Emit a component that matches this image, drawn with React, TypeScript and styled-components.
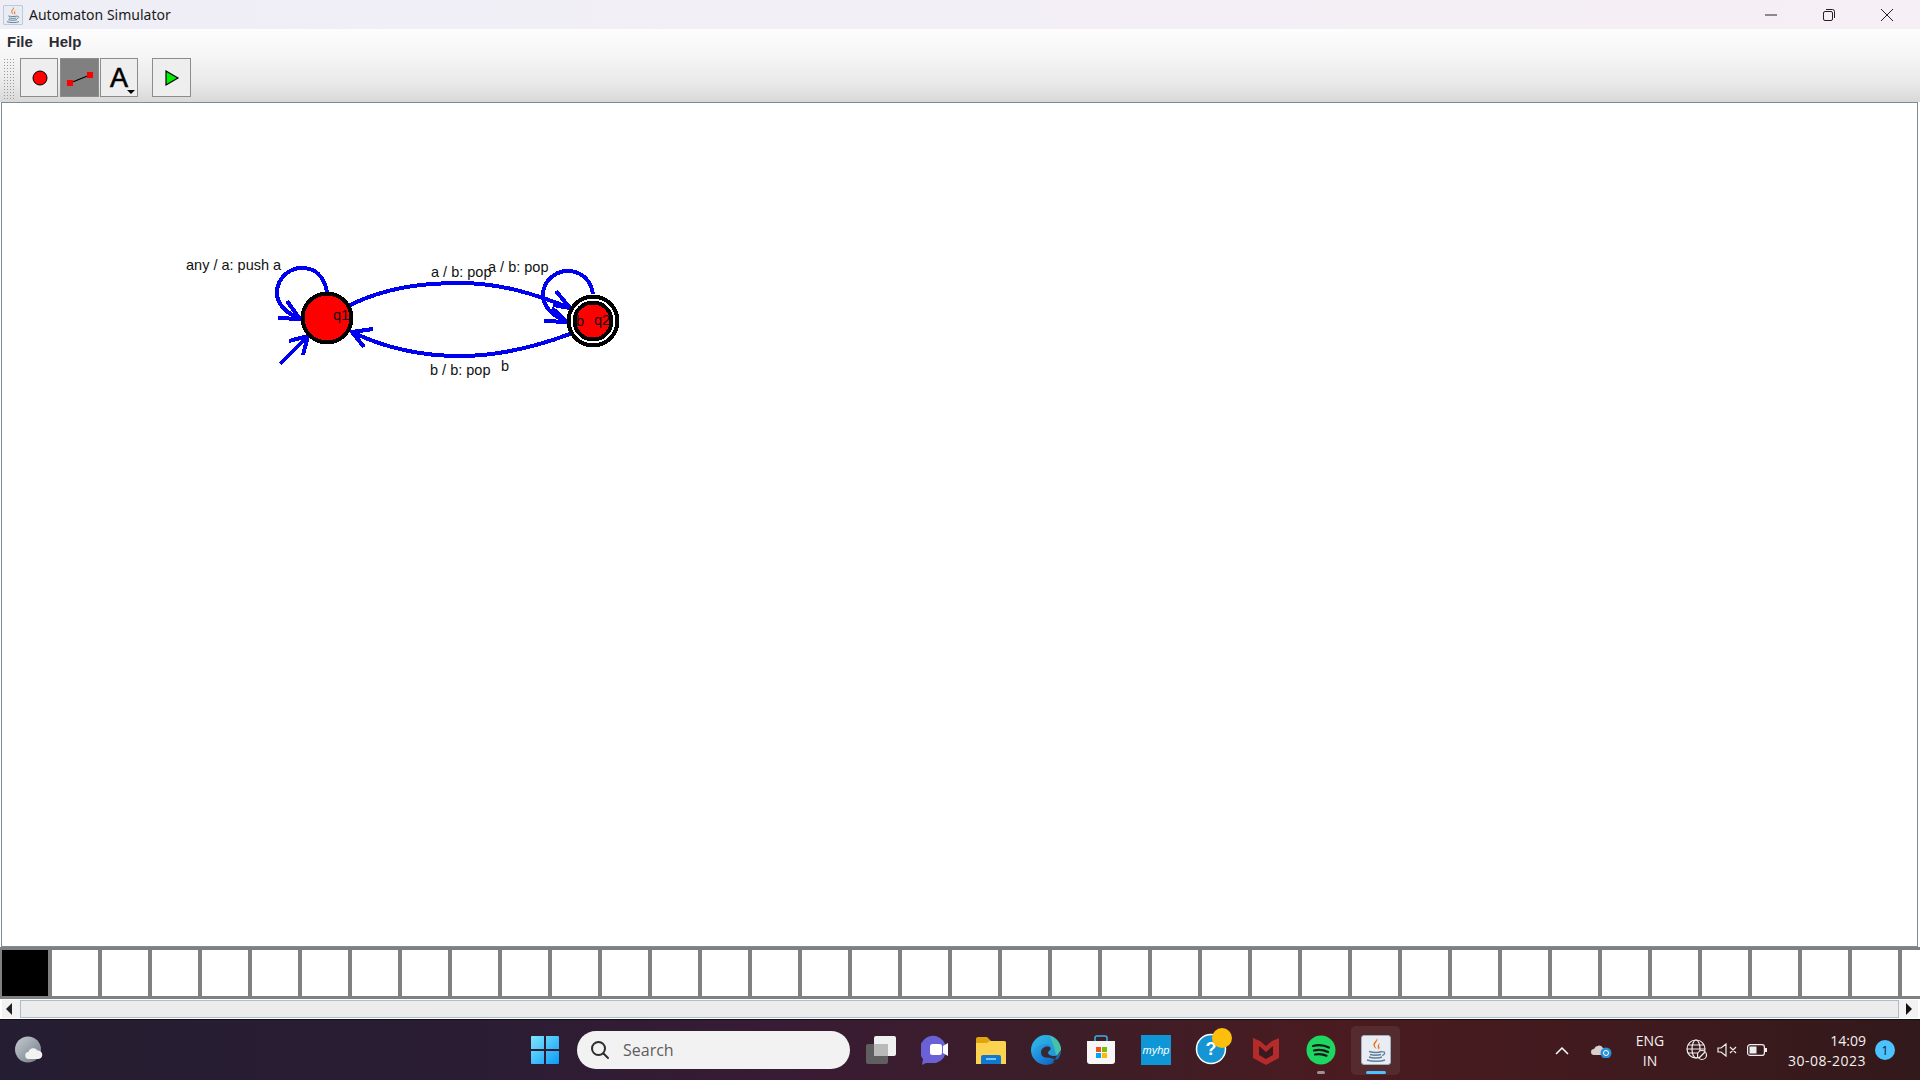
import styled, { createGlobalStyle } from "styled-components";

const GlobalStyle = createGlobalStyle`
  html, body {
    margin: 0;
    padding: 0;
    background: #fff;
    overflow: hidden;
  }
  * {
    box-sizing: border-box;
  }
`;

const Screen = styled.div`
  width: 1920px;
  height: 1080px;
  display: flex;
  flex-direction: column;
  font-family: "Liberation Sans", Arial, sans-serif;
`;

const TitleBar = styled.div`
  height: 29px;
  flex: none;
  display: flex;
  align-items: center;
  padding-left: 3px;
  background: linear-gradient(90deg, #eeeef6 0%, #f3eff6 50%, #f6eff5 100%);
`;

const TitleText = styled.span`
  margin-left: 6px;
  font-family: "Noto Sans", sans-serif;
  font-size: 14px;
  color: #1a1a1a;
`;

const WindowControls = styled.div`
  margin-left: auto;
  padding-right: 4px;
  display: flex;
`;

const WindowButton = styled.div`
  width: 58px;
  height: 29px;
  display: flex;
  align-items: center;
  justify-content: center;
`;

const Chrome = styled.div`
  flex: none;
  height: 73px;
  background: linear-gradient(180deg, #fdfdfd 0%, #f6f6f6 35%, #e9e9e9 75%, #d8d8d8 100%);
`;

const MenuBar = styled.div`
  height: 25px;
  display: flex;
  align-items: center;
  gap: 16px;
  padding-left: 7px;
`;

const MenuItem = styled.span`
  font-size: 15px;
  font-weight: 700;
  color: #2b2b33;
`;

const ToolBar = styled.div`
  display: flex;
  align-items: flex-start;
  padding: 4px 0 0 3px;
`;

const Grip = styled.div`
  width: 11px;
  height: 41px;
  margin-right: 6px;
  background-image: radial-gradient(#9a9a9a 0.8px, transparent 0.9px);
  background-size: 3px 3px;
`;

const ToolButton = styled.div<{ $pressed?: boolean; $gap?: number; $wide?: boolean }>`
  position: relative;
  width: ${({ $wide }) => ($wide ? 39 : 38)}px;
  height: 39px;
  margin-left: ${({ $gap }) => $gap ?? 0}px;
  padding: 1px 0 0 1px;
  display: flex;
  align-items: center;
  justify-content: center;
  border: 1px solid #8c8c8c;
  background: ${({ $pressed }) => ($pressed ? "#808080" : "#eeeeee")};
`;

const LetterGlyph = styled.span`
  font-size: 27px;
  line-height: 1;
  margin: 0 1px 0 0;
  color: #000;
  -webkit-text-stroke: 0.6px #000;
`;

const DropArrow = styled.span`
  position: absolute;
  right: 2px;
  bottom: 2px;
  border-left: 4px solid transparent;
  border-right: 4px solid transparent;
  border-top: 4px solid #000;
`;

const Canvas = styled.div`
  flex: 1;
  margin: 0 2px 0 1px;
  background: #fff;
  border: 1px solid #7b8b9a;
`;

const DiagramSvg = styled.svg`
  display: block;
`;

const Label = styled.text`
  font-family: "Liberation Sans", Arial, sans-serif;
  font-size: 14.5px;
  fill: #111;
`;

const Tape = styled.div`
  flex: none;
  height: 52px;
  padding: 3px 0 3px 2px;
  display: flex;
  gap: 4px;
  overflow: hidden;
  background: #808080;
`;

const TapeCell = styled.div<{ $filled?: boolean }>`
  flex: none;
  width: 46px;
  background: ${({ $filled }) => ($filled ? "#000" : "#fff")};
`;

const ScrollBar = styled.div`
  flex: none;
  height: 20px;
  display: flex;
  padding: 1px 2px;
  background: #fff;
`;

const ScrollButton = styled.div<{ $width: number; $inset: number }>`
  flex: none;
  width: ${({ $width }) => $width}px;
  padding-left: ${({ $inset }) => $inset}px;
  display: flex;
  align-items: center;
  background: #f2f2f2;
`;

const ScrollTrack = styled.div`
  flex: 1;
  background: #ececec;
  border: 1px solid #a9bcd2;
`;

const ArrowLeft = styled.span`
  border-top: 6px solid transparent;
  border-bottom: 6px solid transparent;
  border-right: 6px solid #222;
`;

const ArrowRight = styled.span`
  border-top: 6px solid transparent;
  border-bottom: 6px solid transparent;
  border-left: 6px solid #111;
`;

const Taskbar = styled.div`
  flex: none;
  height: 61px;
  display: grid;
  grid-template-columns: 1fr auto 1fr;
  align-items: center;
  border-top: 1px solid #111;
  background: linear-gradient(90deg, #251d31 0%, #2a1d33 25%, #381b35 40%, #3c1e28 55%, #4a1b20 70%, #3f1a1e 85%, #32191b 100%);
`;

const TaskLeft = styled.div`
  padding-left: 12px;
  display: flex;
  align-items: center;
`;

const TaskCenter = styled.div`
  display: flex;
  align-items: center;
`;

const TaskSlot = styled.div<{ $active?: boolean }>`
  position: relative;
  width: 55px;
  height: 49px;
  display: flex;
  align-items: center;
  justify-content: center;
  &::before {
    content: "";
    position: absolute;
    left: 3px;
    right: 3px;
    top: 0;
    bottom: 0;
    border-radius: 5px;
    background: ${({ $active }) => ($active ? "rgba(255,255,255,0.07)" : "transparent")};
  }
  svg {
    position: relative;
  }
`;

const RunDot = styled.span<{ $active?: boolean }>`
  position: absolute;
  bottom: 1px;
  left: 50%;
  transform: translateX(-50%);
  width: ${({ $active }) => ($active ? 20 : 8)}px;
  height: 3px;
  border-radius: 2px;
  background: ${({ $active }) => ($active ? "#4cc2ff" : "#9d9295")};
`;

const SearchPill = styled.div`
  width: 273px;
  height: 38px;
  margin: 0 3px 0 5px;
  padding-left: 13px;
  display: flex;
  align-items: center;
  gap: 13px;
  border-radius: 19px;
  background: #f2f2f3;
  font-family: "Open Sans", sans-serif;
  font-size: 16px;
  color: #5d5d5d;
`;

const TaskRight = styled.div`
  display: flex;
  justify-content: flex-end;
  align-items: center;
  padding-right: 25px;
  color: #f4f0f0;
  font-family: "Open Sans", sans-serif;
  font-size: 14px;
`;

const TrayIcon = styled.div<{ $width: number }>`
  width: ${({ $width }) => $width}px;
  display: flex;
  justify-content: center;
`;

const TwoLines = styled.div<{ $align: string; $width: number }>`
  width: ${({ $width }) => $width}px;
  display: flex;
  flex-direction: column;
  gap: 1px;
  line-height: 19px;
  text-align: ${({ $align }) => $align};
`;

const DateText = styled.span`
  letter-spacing: 0.5px;
  white-space: nowrap;
`;

const Badge = styled.div`
  flex: none;
  margin-left: 9px;
  width: 20px;
  height: 20px;
  border-radius: 50%;
  display: flex;
  align-items: center;
  justify-content: center;
  background: #4cc2ff;
  color: #10202c;
  font-size: 12px;
`;

const arrow = (a: [number, number], b: [number, number], c: [number, number]) =>
  `M${a[0]} ${a[1]} L${b[0]} ${b[1]} L${c[0]} ${c[1]}`;

function JavaTile({ size }: { size: number }) {
  return (
    <svg width={size} height={size} viewBox="0 0 30 30">
      <rect x="0.5" y="0.5" width="29" height="29" rx="2.5" fill="#e9edf3" stroke="#9fb0c2" />
      <path d="M16 3c2 3-3 5-2 8 .4 1.4 1.5 2 1.5 3-2-1-3.500-3-3-5 .5-2.400 3.500-3.500 3.500-6z" fill="#e8711c" />
      <path d="M19 8c-2 1.500-3 2.500-2 5 .3.800.6 1 .3 1.800 1.500-1 1.400-2.300.9-3.500-.4-1 .1-2 .8-3.300z" fill="#e8711c" />
      <path d="M8 16.500c4 1 10 1 13 0M9 19.500c3 .8 8 .8 11 0M8 22c3 1.200 10 1.200 13 0M6 25c5 1.800 14 1.800 18 0" fill="none" stroke="#5f7f9c" strokeWidth="1.500" />
      <path d="M21 17c3-1 4 2 0 3.500" fill="none" stroke="#5f7f9c" strokeWidth="1.200" />
    </svg>
  );
}

function App() {
  return (
    <Screen>
      <GlobalStyle />
      <TitleBar>
        <JavaTile size={20} />
        <TitleText>Automaton Simulator</TitleText>
        <WindowControls>
          <WindowButton>
            <svg width="14" height="14" viewBox="0 0 14 14">
              <path d="M1 7h12" stroke="#222" strokeWidth="1" />
            </svg>
          </WindowButton>
          <WindowButton>
            <svg width="14" height="14" viewBox="0 0 14 14" fill="none" stroke="#222">
              <rect x="1.500" y="3.500" width="9" height="9" rx="1.500" />
              <path d="M4 1.500h6.500a2 2 0 0 1 2 2V10" />
            </svg>
          </WindowButton>
          <WindowButton>
            <svg width="14" height="14" viewBox="0 0 14 14">
              <path d="M1 1l12 12M13 1L1 13" stroke="#222" strokeWidth="1" />
            </svg>
          </WindowButton>
        </WindowControls>
      </TitleBar>

      <Chrome>
        <MenuBar>
          <MenuItem>File</MenuItem>
          <MenuItem>Help</MenuItem>
        </MenuBar>
        <ToolBar>
          <Grip />
          <ToolButton>
            <svg width="18" height="18" viewBox="0 0 18 18">
              <circle cx="9" cy="9" r="7" fill="#f00" stroke="#000" />
            </svg>
          </ToolButton>
          <ToolButton $pressed $wide $gap={2}>
            <svg width="26" height="18" viewBox="0 0 26 18">
              <path d="M3 14L23 6" stroke="#000" strokeWidth="1.200" />
              <rect x="0" y="11" width="6" height="6" fill="#f00" />
              <rect x="20" y="3" width="6" height="6" fill="#f00" />
            </svg>
          </ToolButton>
          <ToolButton $gap={1}>
            <LetterGlyph>A</LetterGlyph>
            <DropArrow />
          </ToolButton>
          <ToolButton $wide $gap={14}>
            <svg width="16" height="18" viewBox="0 0 16 18">
              <path d="M2 2L14 9L2 16Z" fill="#0e0" stroke="#000" strokeWidth="1.200" />
            </svg>
          </ToolButton>
        </ToolBar>
      </Chrome>

      <Canvas>
        <DiagramSvg width="700" height="300" viewBox="2 103 700 300" shapeRendering="crispEdges">
          <g fill="none" stroke="#0000f0" strokeWidth="4">
            <path d="M350 305C385 288 420 283 460 283C500 283 535 294 570 308" />
            <path d={arrow([556, 291], [570, 308], [553, 305])} />
            <path d="M570 334C535 347 500 356 460 356C420 356 385 348 352 332" />
            <path d={arrow([373, 329], [352, 332], [364, 347])} />
            <path d="M327 292C324 275 314 268 302 268C288 268 277 279 277 293C277 305 288 314 300 319" />
            <path d={arrow([278, 318], [300, 319], [287, 301])} />
            <path d="M280 364L308 336" />
            <path d={arrow([289, 341], [308, 336], [303, 355])} />
            <path d="M593 294C591 280 581 271 568 271C554 271 543 282 543 295C543 307 553 316 567 322" />
            <path d={arrow([544, 321], [567, 322], [552, 308])} />
          </g>
          <circle cx="327" cy="318" r="24.500" fill="#f00" stroke="#000" strokeWidth="4" />
          <circle cx="593" cy="321" r="24.500" fill="#fff" stroke="#000" strokeWidth="4" />
          <circle cx="593" cy="321" r="18.500" fill="#f00" stroke="#000" strokeWidth="4" />
          <g>
            <Label x="186" y="270">any / a: push a</Label>
            <Label x="333" y="320">q1</Label>
            <Label x="431" y="277">a / b: pop</Label>
            <Label x="488" y="272">a / b: pop</Label>
            <Label x="430" y="375">b / b: pop</Label>
            <Label x="501" y="371">b</Label>
            <Label x="576" y="326">b</Label>
            <Label x="594" y="325">q2</Label>
          </g>
        </DiagramSvg>
      </Canvas>

      <Tape>
        {Array(39)
          .fill(undefined)
          .map((_, i) => (
            <TapeCell key={i} $filled={i === 0} />
          ))}
      </Tape>

      <ScrollBar>
        <ScrollButton $width={18} $inset={4}>
          <ArrowLeft />
        </ScrollButton>
        <ScrollTrack />
        <ScrollButton $width={19} $inset={7}>
          <ArrowRight />
        </ScrollButton>
      </ScrollBar>

      <Taskbar>
        <TaskLeft>
          <svg width="32" height="30" viewBox="0 0 32 30">
            <defs>
              <linearGradient id="moon" x1="0" y1="0" x2="1" y2="1">
                <stop offset="0" stopColor="#c6ccd2" />
                <stop offset="1" stopColor="#6f7a86" />
              </linearGradient>
            </defs>
            <circle cx="16" cy="14.500" r="13" fill="url(#moon)" />
            <path d="M17 24a3.500 3.500 0 0 1-.5-7 5 5 0 0 1 9-1.500 4.200 4.200 0 0 1 1 8.500z" fill="#f2f2f2" />
          </svg>
        </TaskLeft>

        <TaskCenter>
          <TaskSlot>
            <svg width="30" height="30" viewBox="0 0 30 30">
              <defs>
                <linearGradient id="win" x1="0" y1="0" x2="1" y2="1">
                  <stop offset="0" stopColor="#7fe6ff" />
                  <stop offset="1" stopColor="#0c9bf5" />
                </linearGradient>
              </defs>
              <path d="M1 2a1 1 0 0 1 1-1h12v13H1zM16 1h12a1 1 0 0 1 1 1v12H16zM1 16h13v13H2a1 1 0 0 1-1-1zM16 16h13v12a1 1 0 0 1-1 1H16z" fill="url(#win)" />
            </svg>
          </TaskSlot>
          <SearchPill>
            <svg width="20" height="20" viewBox="0 0 20 20" fill="none" stroke="#2c2c2c" strokeWidth="2">
              <circle cx="8.500" cy="8.500" r="6.500" />
              <path d="M13.500 13.500L18 18" strokeLinecap="round" />
            </svg>
            Search
          </SearchPill>
          <TaskSlot>
            <svg width="30" height="28" viewBox="0 0 30 28">
              <rect x="0" y="8" width="22" height="20" rx="2" fill="#5f5f5f" />
              <rect x="8" y="0" width="22" height="20" rx="2" fill="#f0f0f0" />
              <rect x="8" y="8" width="14" height="12" fill="#b9b9b9" />
            </svg>
          </TaskSlot>
          <TaskSlot>
            <svg width="30" height="30" viewBox="0 0 30 30">
              <path d="M15 1a14 14 0 0 1 0 27H5l-4 2 1-6A14 14 0 0 1 15 1z" fill="#6a61d6" />
              <rect x="9" y="9" width="12" height="11" rx="2.500" fill="#fff" />
              <path d="M22 11l5-3v13l-5-3z" fill="#fff" />
            </svg>
          </TaskSlot>
          <TaskSlot>
            <svg width="30" height="28" viewBox="0 0 30 28">
              <path d="M0 3a2 2 0 0 1 2-2h9l4 4h13a2 2 0 0 1 2 2v3H0z" fill="#e0a50e" />
              <path d="M0 7h11l3-2h14a2 2 0 0 1 2 2v21H0z" fill="#fcd351" />
              <path d="M5 28v-7a2 2 0 0 1 2-2h16a2 2 0 0 1 2 2v7z" fill="#0f78d0" />
              <rect x="10" y="22" width="10" height="2" fill="#7cc4f5" />
            </svg>
          </TaskSlot>
          <TaskSlot>
            <svg width="30" height="30" viewBox="0 0 30 30">
              <defs>
                <linearGradient id="edge" x1="0" y1="0" x2="1" y2="1">
                  <stop offset="0" stopColor="#35c1f1" />
                  <stop offset="0.6" stopColor="#1a7fd8" />
                  <stop offset="1" stopColor="#0c59a4" />
                </linearGradient>
              </defs>
              <circle cx="15" cy="15" r="15" fill="url(#edge)" />
              <path d="M19 1c7 2 11 8 11 14 0 3-1.500 4.500-5 5-1-5-3-11-6-19z" fill="#63d46a" />
              <path d="M30 16c0 3-3 5-7 5-4 0-6-1.500-6-3 0-2 3-2 3-4.500 0-3-3-4.500-6-4.500-5 0-10 3-13 8-.5-1-1-1.500-1-2C2 6 8 0 15 0c8 0 15 6 15 16z" fill="#2bb3de" opacity="0.55" />
              <path d="M30 15c0 4-3.500 6-7 6-3.500 0-6-1.500-6-3.500 0-1.500 2.500-2 2.500-4 0-1.500-2-2-3.500-2-3 0-6 2.500-6 6 0 3 2.500 5 5.500 5 4 0 7 2 12 2-2 2-4 3-6 3" fill="#3a2020" opacity="0.9" />
            </svg>
          </TaskSlot>
          <TaskSlot>
            <svg width="30" height="30" viewBox="0 0 30 30">
              <path d="M9 6V3a2 2 0 0 1 2-2h8a2 2 0 0 1 2 2v3" fill="none" stroke="#35b4ea" strokeWidth="1.500" />
              <path d="M1 6h28v20a3 3 0 0 1-3 3H4a3 3 0 0 1-3-3z" fill="#f7f7f7" />
              <rect x="10" y="12" width="5" height="5" fill="#f25022" />
              <rect x="16" y="12" width="5" height="5" fill="#7fba00" />
              <rect x="10" y="18" width="5" height="5" fill="#00a4ef" />
              <rect x="16" y="18" width="5" height="5" fill="#ffb900" />
            </svg>
          </TaskSlot>
          <TaskSlot>
            <svg width="30" height="30" viewBox="0 0 30 30">
              <rect width="30" height="30" fill="#0f96d6" />
              <text x="15" y="19" textAnchor="middle" fontFamily="Liberation Sans, sans-serif" fontSize="11" fontStyle="italic" fill="#fff">myhp</text>
            </svg>
          </TaskSlot>
          <TaskSlot>
            <svg width="44" height="44" viewBox="0 0 44 44">
              <circle cx="22" cy="21" r="14.500" fill="#1595d3" stroke="#fff" strokeWidth="1.500" />
              <text x="22" y="27" textAnchor="middle" fontFamily="Liberation Sans, sans-serif" fontWeight="700" fontSize="18" fill="#fff">?</text>
              <circle cx="33" cy="10" r="10" fill="#fdbf0b" />
            </svg>
          </TaskSlot>
          <TaskSlot>
            <svg width="28" height="30" viewBox="0 0 28 30">
              <path d="M1 3l7 3 6 5 6-5 7-3v20l-13 7-13-7z" fill="#b52a2a" />
              <path d="M7 11l7 6 7-6v9l-7 4-7-4z" fill="#3a1a1e" />
            </svg>
          </TaskSlot>
          <TaskSlot>
            <svg width="30" height="30" viewBox="0 0 30 30">
              <circle cx="15" cy="15" r="14.500" fill="#1ed760" />
              <path d="M7 11c5-1.500 11-1 16 1.500M8 15.500c4.500-1 9.500-.7 14 1.500M9 19.500c4-.8 8-.5 11.500 1.200" fill="none" stroke="#15181a" strokeWidth="2.200" strokeLinecap="round" />
            </svg>
            <RunDot />
          </TaskSlot>
          <TaskSlot $active>
            <JavaTile size={30} />
            <RunDot $active />
          </TaskSlot>
        </TaskCenter>

        <TaskRight>
          <TrayIcon $width={40}>
            <svg width="14" height="9" viewBox="0 0 14 9" fill="none" stroke="#fff" strokeWidth="1.500">
              <path d="M1 8l6-6 6 6" />
            </svg>
          </TrayIcon>
          <TrayIcon $width={40}>
            <svg width="22" height="16" viewBox="0 0 22 16">
              <path d="M3 13a3 3 0 0 1 0-6 5 5 0 0 1 9-1 4 4 0 0 1 4 5v2z" fill="#d8cfcf" />
              <circle cx="15" cy="11" r="5.500" fill="#2b8fd8" />
              <circle cx="15" cy="11" r="2.500" fill="none" stroke="#fff" />
            </svg>
          </TrayIcon>
          <TwoLines $align="center" $width={56}>
            <span>ENG</span>
            <span>IN</span>
          </TwoLines>
          <TrayIcon $width={38}>
            <svg width="22" height="22" viewBox="0 0 22 22" fill="none" stroke="#eee" strokeWidth="1.200">
              <circle cx="10" cy="10" r="9" />
              <ellipse cx="10" cy="10" rx="4" ry="9" />
              <path d="M1 10h18M2 6h16M2 14h16" />
              <circle cx="16" cy="16" r="4.500" fill="#3a1a1e" />
              <path d="M13 19l6-6" />
            </svg>
          </TrayIcon>
          <TrayIcon $width={22}>
            <svg width="20" height="14" viewBox="0 0 20 14" fill="none" stroke="#eee" strokeWidth="1.200">
              <path d="M1 5h3l5-4v12l-5-4H1zM13 4l6 6M19 4l-6 6" />
            </svg>
          </TrayIcon>
          <TrayIcon $width={38}>
            <svg width="20" height="12" viewBox="0 0 20 12">
              <rect x="0.600" y="0.600" width="16.800" height="10.800" rx="2.500" fill="none" stroke="#eee" strokeWidth="1.200" />
              <rect x="2.500" y="2.500" width="7" height="7" fill="#eee" />
              <rect x="18" y="4" width="2" height="4" fill="#eee" />
            </svg>
          </TrayIcon>
          <TwoLines $align="right" $width={90}>
            <span>14:09</span>
            <DateText>30-08-2023</DateText>
          </TwoLines>
          <Badge>1</Badge>
        </TaskRight>
      </Taskbar>
    </Screen>
  );
}

export default App;
